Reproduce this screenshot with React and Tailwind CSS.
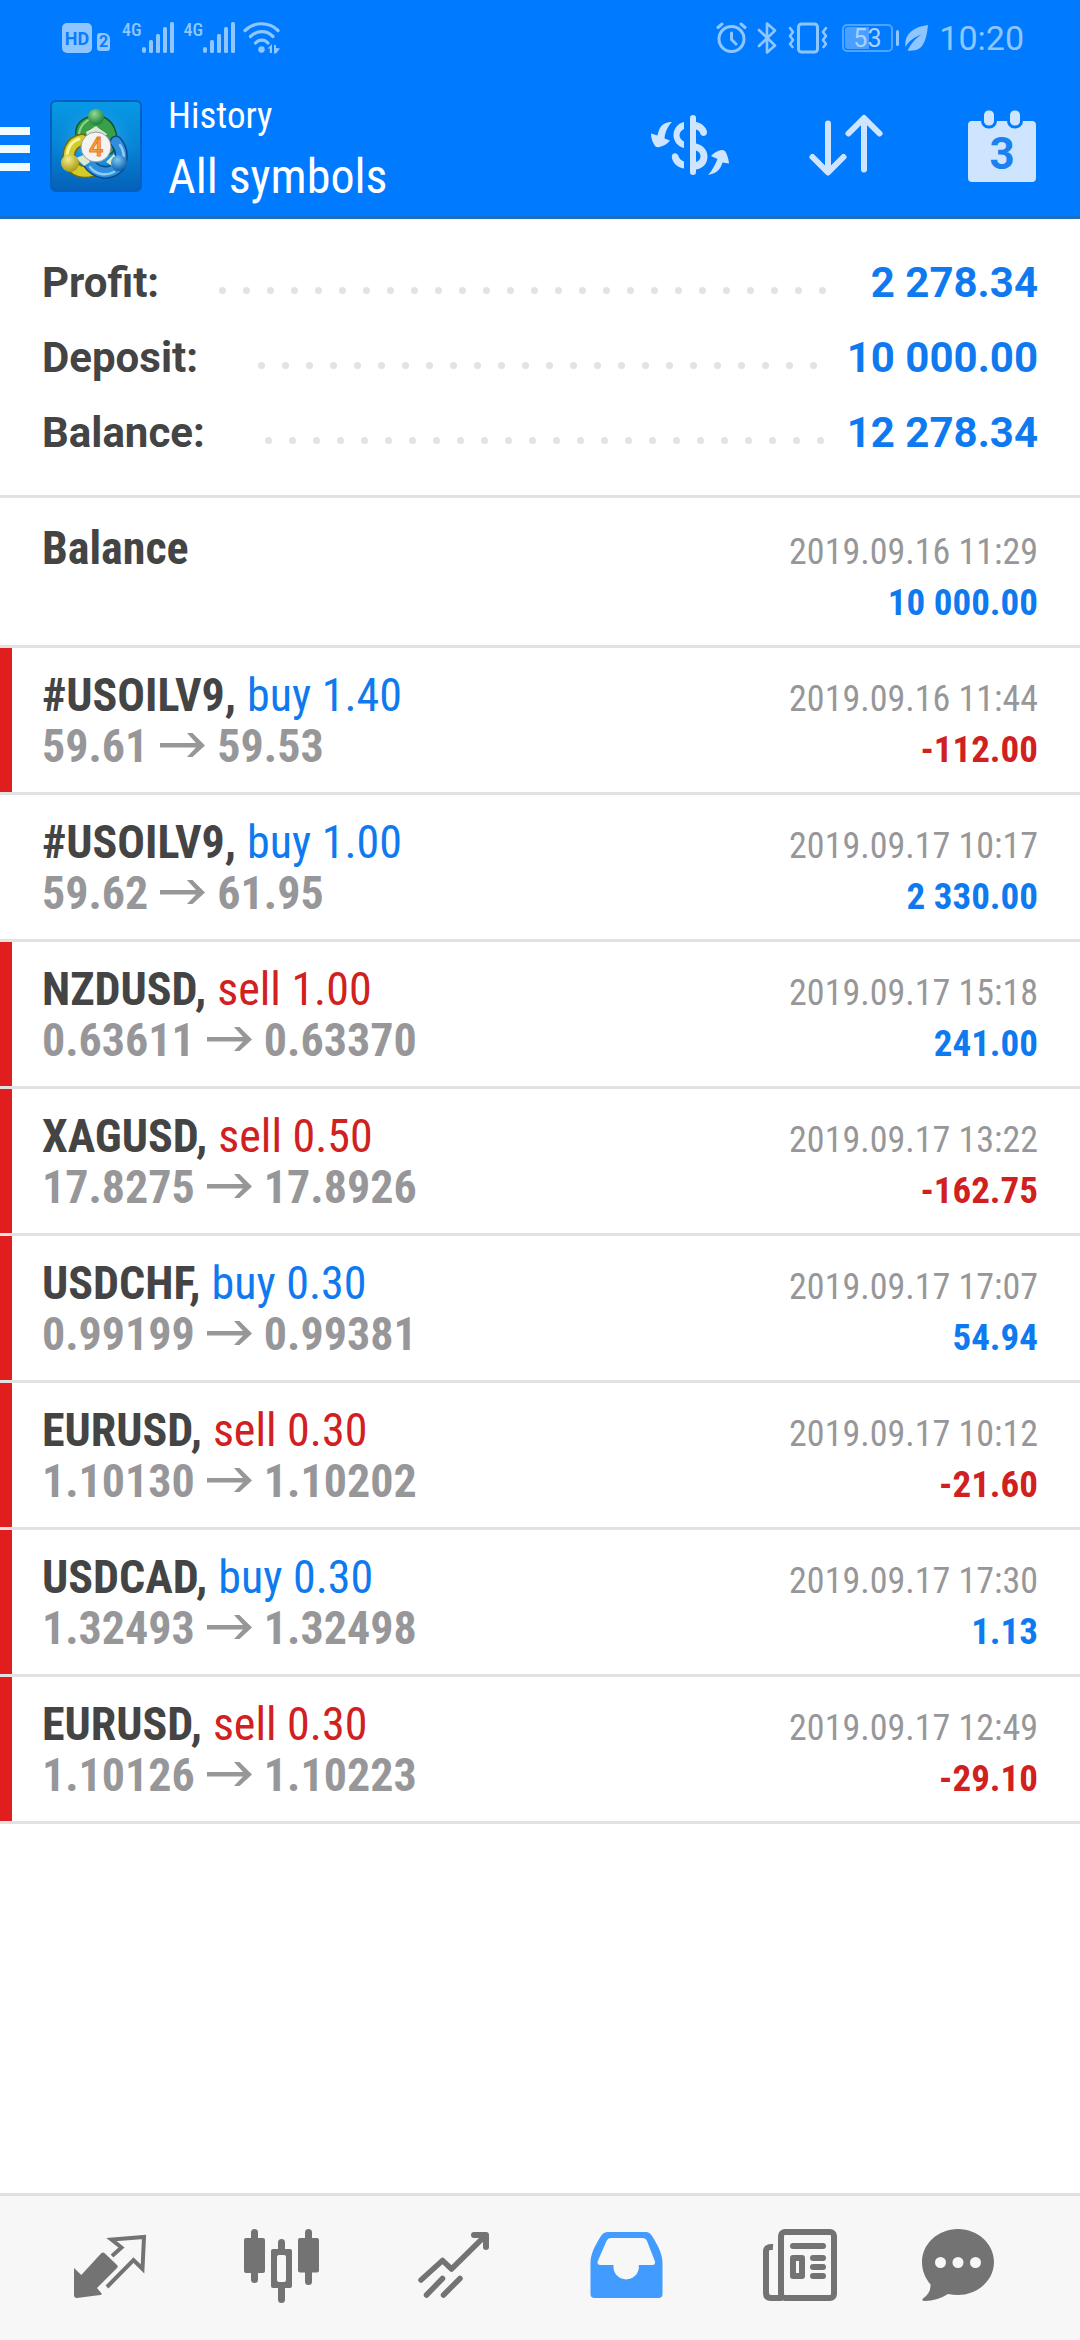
const CONDENSED = "font-['Roboto_Condensed','Roboto','Liberation_Sans',sans-serif]";

const summary = [
  { label: "Profit:", value: "2 278.34" },
  { label: "Deposit:", value: "10 000.00" },
  { label: "Balance:", value: "12 278.34" },
];

const deals = [
  { symbol: "#USOILV9", side: "buy", volume: "1.40", open: "59.61", close: "59.53", time: "2019.09.16 11:44", profit: "-112.00", marked: true },
  { symbol: "#USOILV9", side: "buy", volume: "1.00", open: "59.62", close: "61.95", time: "2019.09.17 10:17", profit: "2 330.00", marked: false },
  { symbol: "NZDUSD", side: "sell", volume: "1.00", open: "0.63611", close: "0.63370", time: "2019.09.17 15:18", profit: "241.00", marked: true },
  { symbol: "XAGUSD", side: "sell", volume: "0.50", open: "17.8275", close: "17.8926", time: "2019.09.17 13:22", profit: "-162.75", marked: true },
  { symbol: "USDCHF", side: "buy", volume: "0.30", open: "0.99199", close: "0.99381", time: "2019.09.17 17:07", profit: "54.94", marked: true },
  { symbol: "EURUSD", side: "sell", volume: "0.30", open: "1.10130", close: "1.10202", time: "2019.09.17 10:12", profit: "-21.60", marked: true },
  { symbol: "USDCAD", side: "buy", volume: "0.30", open: "1.32493", close: "1.32498", time: "2019.09.17 17:30", profit: "1.13", marked: true },
  { symbol: "EURUSD", side: "sell", volume: "0.30", open: "1.10126", close: "1.10223", time: "2019.09.17 12:49", profit: "-29.10", marked: true },
];

function Signal() {
  return (
    <div className="flex items-start">
      <span className={`${CONDENSED} text-[18px] leading-4 font-medium`}>4G</span>
      <svg width="32" height="32" viewBox="0 0 32 32" fill="currentColor" aria-hidden="true">
        <rect x="0" y="25" width="4" height="6" rx="2" />
        <rect x="7" y="18" width="4" height="13" rx="1.5" />
        <rect x="14" y="12" width="4" height="19" rx="1.5" />
        <rect x="21" y="5" width="4" height="26" rx="1.5" />
        <rect x="28" y="0" width="4" height="31" rx="1.5" />
      </svg>
    </div>
  );
}

function StatusBar() {
  return (
    <div className="flex h-[76px] items-center justify-between pr-14 pl-[62px] text-[#8fc6ff]">
      <div className="flex items-center">
        <span className="flex h-[30px] w-[30px] items-center justify-center rounded-[5px] bg-[#8fc6ff] font-['Roboto',sans-serif] text-[18px] font-bold text-[#0a7cff]">
          HD
        </span>
        <span className="mt-2 ml-[5px] flex h-[18px] w-[13px] items-center justify-center rounded-[3px] rounded-tr-[6px] bg-[#8fc6ff] font-['Roboto',sans-serif] text-[16px] font-bold text-[#0a7cff]">
          2
        </span>
        <div className="ml-3 flex gap-2.5">
          <Signal />
          <Signal />
        </div>
        <svg className="ml-2" width="38" height="32" viewBox="0 0 38 32" aria-hidden="true">
          <g fill="none" stroke="currentColor" strokeWidth="3.2" strokeLinecap="round">
            <path d="M2 8.500C11-.5 26-.5 35 8.500" />
            <path d="M7.500 14.500C14 8 23.500 8 30 14.500" />
            <path d="M12.500 21C16 17.200 21.500 17.200 25 21" />
          </g>
          <g fill="currentColor">
            <circle cx="18.500" cy="27.500" r="3.200" />
            <path d="M29 22v9h-2.200v-4.500H24.500zM31 23l2 0v3l4 0.500-4 5h-2z" />
          </g>
        </svg>
      </div>
      <div className="flex items-center">
        <svg width="32" height="32" viewBox="0 0 32 32" fill="none" stroke="currentColor" strokeWidth="3" strokeLinecap="round" strokeLinejoin="round" aria-hidden="true">
          <circle cx="15.500" cy="17" r="12.500" />
          <path d="M15.500 11v6.500l4.500 4.500M2 5.500L6 2M25 2l4 3.500" />
        </svg>
        <svg className="ml-2" width="22" height="32" viewBox="0 0 22 32" fill="none" stroke="currentColor" strokeWidth="2.600" strokeLinecap="round" strokeLinejoin="round" aria-hidden="true">
          <path d="M3 8l16 15.500-8 7V1.500l8 7L3 24" />
        </svg>
        <svg className="ml-2.5" width="40" height="32" viewBox="0 0 40 32" fill="none" stroke="currentColor" strokeWidth="3" strokeLinecap="round" strokeLinejoin="round" aria-hidden="true">
          <rect x="10.500" y="2" width="19" height="28" rx="3" />
          <path strokeWidth="2.600" d="M2 6l3 4-3 4 3 4-3 4 2.500 3M38 6l-3 4 3 4-3 4 3 4-2.500 3" />
        </svg>
        <div className="ml-3.5 flex h-7 w-[51px] items-center rounded-[5px] border-2 border-[#4ea4ff] p-px">
          <div className="flex h-full w-6 items-center rounded-l-[3px] bg-[#4a9fff] pl-2 font-['Roboto',sans-serif] text-[25px] leading-none text-[#a9d4ff]">
            53
          </div>
        </div>
        <span className="ml-[3px] h-4 w-[3px] rounded-full bg-[#8fc6ff]" />
        <svg className="ml-[6px]" width="24" height="26" viewBox="0 0 24 26" aria-hidden="true">
          <path fill="currentColor" d="M23 0C21 20 16 27 2.500 25.500 7 17 11 13 17 9.500 9 12 4 16 0.500 22-1 10 7 2 23 0z" />
        </svg>
        <time className="ml-2.5 font-['Roboto',sans-serif] text-[34px] leading-none">10:20</time>
      </div>
    </div>
  );
}

function Logo() {
  return (
    <svg width="92" height="92" viewBox="0 0 92 92" role="img" aria-label="MetaTrader 4">
      <defs>
        <linearGradient id="tile" x1="0" y1="0" x2="0" y2="1">
          <stop offset="0" stopColor="#0799e6" />
          <stop offset="0.500" stopColor="#0684d6" />
          <stop offset="1" stopColor="#0560b8" />
        </linearGradient>
        <radialGradient id="glow" cx="0.500" cy="0.450" r="0.500">
          <stop offset="0" stopColor="#5fd0f5" stopOpacity="0.900" />
          <stop offset="1" stopColor="#0a8be0" stopOpacity="0" />
        </radialGradient>
        <radialGradient id="greenHead" cx="0.400" cy="0.300" r="0.700">
          <stop offset="0" stopColor="#8fdc8f" />
          <stop offset="1" stopColor="#1c7f3a" />
        </radialGradient>
        <radialGradient id="yellowHead" cx="0.400" cy="0.300" r="0.700">
          <stop offset="0" stopColor="#f3ec8a" />
          <stop offset="1" stopColor="#a79a12" />
        </radialGradient>
        <radialGradient id="blueHead" cx="0.400" cy="0.300" r="0.700">
          <stop offset="0" stopColor="#7cc8f2" />
          <stop offset="1" stopColor="#0c5fae" />
        </radialGradient>
      </defs>
      <rect x="1" y="1" width="90" height="90" rx="5" fill="url(#tile)" stroke="#0560bd" strokeWidth="2" />
      <rect x="4" y="4" width="84" height="84" fill="url(#glow)" />
      <g fill="none" strokeLinecap="round">
        <path stroke="#0f5a2c" strokeWidth="14" d="M33 40C29 27 36 23 46 22 58 22 64 36 58 48" />
        <path stroke="#37a048" strokeWidth="11" d="M33 40C29 27 36 23 46 22 58 22 64 36 58 48" />
        <path stroke="#8fd694" strokeWidth="2" d="M29 36C29 26 36 20 42 19" />
        <path stroke="#6f6a10" strokeWidth="13" d="M32 40C20 42 17 54 20 62 24 72 34 73 42 71" />
        <path stroke="#d3cb28" strokeWidth="10" d="M32 40C20 42 17 54 20 62 24 72 34 73 42 71" />
        <path stroke="#f8f49a" strokeWidth="3" d="M29 39C20 42 17 50 17 56" />
        <path stroke="#0a4a8c" strokeWidth="13" d="M66 42C73 50 72 60 69 66 60 76 46 74 38 62" />
        <path stroke="#2f8fdc" strokeWidth="10" d="M66 42C73 50 72 60 69 66 60 76 46 74 38 62" />
        <path stroke="#8fcdf5" strokeWidth="2.500" d="M40 67C46 75 56 76 64 72M70 45C75 52 74 58 73 62" />
      </g>
      <path d="M36 32L46 26 57 34 54 38H38zM26 58l10-4 4 8-6 4zM56 62l8-8 4 8-6 4z" fill="#d9ead0" />
      <circle cx="46" cy="17" r="8" fill="url(#greenHead)" />
      <circle cx="20" cy="63" r="9" fill="url(#yellowHead)" />
      <circle cx="69" cy="63" r="8" fill="url(#blueHead)" />
      <circle cx="46" cy="47" r="15" fill="#f3f3f3" stroke="#9a9a9a" strokeWidth="1" />
      <text x="46" y="56" textAnchor="middle" className="font-['Roboto',sans-serif] text-[25px] font-medium" fill="#f9a54a" stroke="#ea7d1c" strokeWidth="1">4</text>
    </svg>
  );
}

function Toolbar() {
  const action = "flex w-[156px] items-center justify-center self-stretch text-[#cfe5ff]";
  return (
    <div className="flex h-[140px] items-center text-white">
      <button type="button" aria-label="Open menu" className="flex w-[50px] flex-col gap-2.5 self-stretch pt-[51px]">
        <span className="h-2 w-[30px] bg-[#f0fbff]" />
        <span className="h-2 w-[30px] bg-[#f0fbff]" />
        <span className="h-2 w-[30px] bg-[#f0fbff]" />
      </button>
      <Logo />
      <div className={`${CONDENSED} ml-[26px] flex flex-1 flex-col gap-2 pt-2`}>
        <p className="text-[37px] leading-[46px]">History</p>
        <h1 className="text-[48px] leading-[60px]">All symbols</h1>
      </div>
      <button type="button" aria-label="Currency exchange" className={action}>
        <svg width="96" height="96" viewBox="0 0 96 96" fill="currentColor" aria-hidden="true">
          <rect x="48" y="17" width="6" height="60" rx="3" />
          <path d="M54 24C60 25 65 30 65 34.500 65 38 60 39.500 58.500 36 57.500 33 56 32 54 31.500z" />
          <path d="M54 45.500C61 47 65.500 52 65.500 58.500 65.500 65.500 61 70.500 54 71.500V64c6-2 6-9.500 0-11.500z" />
          <path d="M42 24C35.500 25.500 31.500 31 31.500 37S35.500 48.500 42 50V43.500c-6-3-6-9.500 0-12.500z" />
          <path d="M42 63.500C39 62.500 37 60.500 36 57 34 54 29.500 55 29.800 59 30.500 65 36 70 42 70.500z" />
          <path d="M30 24C19 24 17 31 15.500 37.500L9 35.500C9 41 11 45 13 48q2 2 4.500 1c4-1 8-3 10.500-6.500L22.500 40.500C23 34 26 28 30 24z" />
          <path d="M66 77C77 75 78.500 70 80.500 64.500L87 65.500C86.500 60 85 57 83.500 53.500q-1.500-2-4.500-1.500c-4 1-7.500 3-10 6L75.500 61C73 67 70 73 66 77z" />
        </svg>
      </button>
      <button type="button" aria-label="Sort" className={action}>
        <svg width="96" height="96" viewBox="0 0 96 96" fill="none" stroke="currentColor" strokeWidth="6" strokeLinecap="round" strokeLinejoin="round" aria-hidden="true">
          <path d="M30 25.500V73M14.500 59L30 74.500 45.500 59M66 71.500V21M50.500 35.500L66 20 81.500 35.500" />
        </svg>
      </button>
      <button type="button" aria-label="Select period" className={action}>
        <svg width="96" height="96" viewBox="0 0 96 96" aria-hidden="true">
          <rect x="14" y="23" width="68" height="61" rx="4" fill="currentColor" />
          <g fill="currentColor" stroke="#007aff" strokeWidth="3">
            <rect x="28.500" y="11" width="13" height="18" rx="6" />
            <rect x="54.500" y="11" width="13" height="18" rx="6" />
          </g>
          <text x="48" y="71" textAnchor="middle" fill="#1a82f0" className="font-['Roboto',sans-serif] text-[44px] font-bold">3</text>
        </svg>
      </button>
    </div>
  );
}

function Summary() {
  return (
    <dl className="border-b-[3px] border-[#e2e2e2] px-[42px] pt-[26px] pb-[25px] font-['Roboto','Liberation_Sans',sans-serif] text-[42px] leading-[75px] font-bold">
      {summary.map(({ label, value }) => (
        <div key={label} className="flex items-center">
          <dt className="text-[#444]">{label}</dt>
          <div className="mt-[15px] mr-[21px] ml-[60px] flex h-[7px] flex-1 flex-wrap gap-x-[17px] gap-y-2 overflow-hidden" aria-hidden="true">
            {Array.from({ length: 30 }, (_, i) => (
              <span key={i} className="h-[7px] w-[7px] rounded-full bg-[#e3e3e3]" />
            ))}
          </div>
          <dd className="text-[#0f7af0]">{value}</dd>
        </div>
      ))}
    </dl>
  );
}

function Row({ marked, first, title, detail, time, amount }) {
  return (
    <li className="flex border-b-[3px] border-[#e2e2e2]">
      <span className={marked ? "w-3 bg-[#e01e1e]" : "w-3"} />
      <div className={`grid flex-1 grid-cols-[1fr_auto] grid-rows-[51px_51px] items-baseline pr-[42px] pb-5 pl-[30px] ${first ? "pt-[25px]" : "pt-[22px]"}`}>
        <p className="flex gap-[11px] text-[46px] leading-[51px]">{title}</p>
        <time className="text-right text-[36px] leading-[45px] text-[#97979a]">{time}</time>
        <p className="text-[46px] leading-[51px] font-bold text-[#97979a]">{detail ?? "\u00a0"}</p>
        <p className={`text-right text-[37px] leading-[45px] font-bold ${amount.startsWith("-") ? "text-[#d02020]" : "text-[#0f7af0]"}`}>{amount}</p>
      </div>
    </li>
  );
}

function Arrow() {
  return (
    <svg className="mx-3 inline-block align-baseline" width="45" height="34" viewBox="0 0 45 34" role="img" aria-label="to">
      <path fill="currentColor" d="M0 15h36L27 5h5.500L45 17.500 32.500 29H27l9-9.500H0z" />
    </svg>
  );
}

function History() {
  return (
    <ul className={CONDENSED}>
      <Row first title={<span className="font-bold text-[#444]">Balance</span>} time="2019.09.16 11:29" amount="10 000.00" />
      {deals.map((d) => (
        <Row
          key={d.time}
          marked={d.marked}
          title={
            <>
              <span className="font-bold text-[#444]">{d.symbol},</span>
              <span className={d.side === "buy" ? "text-[#0f7af0]" : "text-[#d02020]"}>{d.side} {d.volume}</span>
            </>
          }
          detail={<>{d.open}<Arrow />{d.close}</>}
          time={d.time}
          amount={d.profit}
        />
      ))}
    </ul>
  );
}

const tabs = [
  {
    label: "Quotes",
    icon: (
      <>
        <path fill="currentColor" d="M12 48l7.300 7L39 33.500q2-2 4 0L55 45q1.500 1.300 0 3L35 68l4.600 5.500q.5 1.500-1.500 1.500L15 78q-3 0-3-3z" />
        <path fill="none" stroke="currentColor" strokeWidth="4" d="M50 36l9.500-8.500-10-8L82 17l-1.500 32-9-9L45 67" />
      </>
    ),
  },
  {
    label: "Charts",
    icon: (
      <g fill="currentColor">
        <rect x="10" y="18" width="21" height="35" rx="2" />
        <rect x="17" y="9" width="7" height="54" rx="3.500" />
        <rect x="44" y="19" width="7" height="64" rx="3.500" />
        <rect x="37" y="29" width="21" height="39" rx="2" />
        <rect x="43" y="35" width="9" height="27" rx="2" fill="#f7f7f7" />
        <rect x="64" y="18" width="21" height="34.500" rx="2" />
        <rect x="71" y="9" width="7" height="56" rx="3.500" />
      </g>
    ),
  },
  {
    label: "Trade",
    icon: (
      <g fill="none" stroke="currentColor" strokeWidth="5.500" strokeLinecap="round">
        <path strokeLinejoin="round" d="M15 60L36.500 40.500 45.500 49 79 16" />
        <path strokeLinejoin="round" strokeWidth="6" d="M68 15H80V27" />
        <path d="M36.500 58.500L20.500 75M54 58.500L37.500 75" />
      </g>
    ),
  },
  {
    label: "History",
    active: true,
    icon: (
      <path
        fill="currentColor"
        fillRule="evenodd"
        d="M30 12H68Q71.500 12 74 16C79 24 84.500 33 84.500 43V74Q84.500 78 80.500 78H16.500Q12.500 78 12.500 74V43C12.500 33 18 24 23 16Q25.500 12 30 12zM32.500 18Q30 18 28.500 21L19.800 41Q18.500 45 22 45H35.500V48A12.700 12.500 0 0 0 60.800 48V45H74.500Q78 45 76.800 41L69 21Q67.500 18 64.500 18z"
      />
    ),
  },
  {
    label: "News",
    icon: (
      <>
        <path fill="none" stroke="currentColor" strokeWidth="6" d="M23 27Q16 26.500 16 31V73Q16 78 21 78H32" />
        <rect x="31" y="12" width="53" height="66" rx="4" fill="none" stroke="currentColor" strokeWidth="6" />
        <g fill="currentColor">
          <rect x="40" y="23" width="36" height="6" rx="3" />
          <rect x="60" y="35" width="16" height="6" rx="3" />
          <rect x="60" y="44" width="16" height="6" rx="3" />
          <rect x="60" y="53" width="16" height="6" rx="3" />
          <path fillRule="evenodd" d="M43 35h9q3 0 3 3v18q0 3-3 3h-9q-3 0-3-3V38q0-3 3-3zm3 6v12h3V41z" />
        </g>
      </>
    ),
  },
  {
    label: "Messages",
    icon: (
      <>
        <path fill="currentColor" d="M36 9C56 9 72 24 72 42S56 75 36 75Q31 75 26 74 15 81 3 81-1 81 1 78.500 9 73 8.500 64.500C3 58 0 50 0 42 0 24 16 9 36 9z" />
        <g fill="#f7f7f7">
          <circle cx="18.500" cy="42.500" r="5.500" />
          <circle cx="36" cy="42.500" r="5.500" />
          <circle cx="53.500" cy="42.500" r="5.500" />
        </g>
      </>
    ),
  },
];

function TabBar() {
  return (
    <nav className="mt-auto grid grid-cols-6 border-t-[3px] border-[#e0e0e0] bg-[#f7f7f7] px-6 py-6">
      {tabs.map(({ label, active, icon }) => (
        <button
          key={label}
          type="button"
          aria-label={label}
          aria-current={active ? "page" : undefined}
          className={`flex items-center justify-center ${active ? "text-[#429cff]" : "text-[#737373]"}`}
        >
          <svg width="96" height="96" viewBox="0 0 96 96" aria-hidden="true">{icon}</svg>
        </button>
      ))}
    </nav>
  );
}

export default function App() {
  return (
    <div className="flex min-h-screen flex-col bg-white">
      <header className="border-b-[3px] border-[#1a6fc4] bg-[#007aff]">
        <StatusBar />
        <Toolbar />
      </header>
      <main>
        <Summary />
        <History />
      </main>
      <TabBar />
    </div>
  );
}
